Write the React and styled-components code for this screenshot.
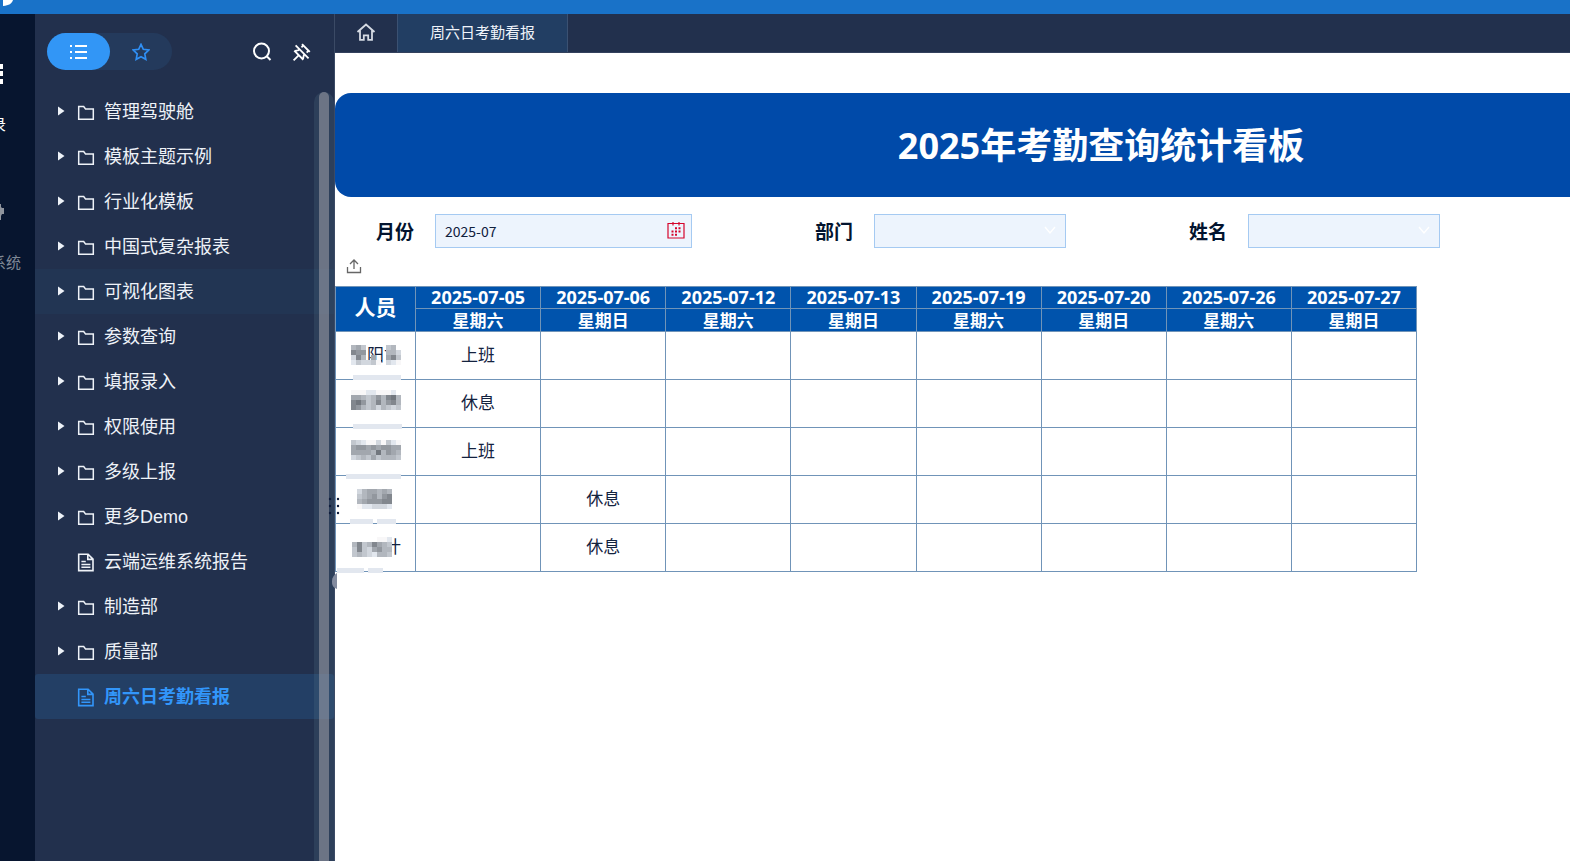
import React from 'react';
import styled, { createGlobalStyle, css } from 'styled-components';
import { RiUnpinLine } from 'react-icons/ri';

const cjk = '"Noto Sans CJK SC", sans-serif';

const GlobalStyle = createGlobalStyle`
  *, *::before, *::after { box-sizing: border-box; }
  body { margin: 0; background: #fff; font-family: "Liberation Sans", ${cjk}; overflow: hidden; }
  button { border: 0; padding: 0; background: none; color: inherit; font: inherit; cursor: pointer; }
  svg { display: block; }
`;

const Page = styled.div`
  display: flex;
  flex-direction: column;
  height: 100vh;
`;

const TopBar = styled.header`
  flex: none;
  height: 14px;
  padding-left: 3px;
  background: #1972c8;
`;

const Body = styled.div`
  display: flex;
  flex: 1;
  min-height: 0;
`;

const Rail = styled.nav`
  flex: none;
  display: flex;
  flex-direction: column;
  gap: 66px;
  width: 35px;
  padding-top: 49px;
  overflow: hidden;
  background: #07152f;
`;

const RailItem = styled.button`
  display: flex;
  flex-direction: column;
  gap: 28px;
  width: 35px;
  color: ${(p) => (p.$muted ? '#7f8896' : '#ffffff')};
  font: 15px/22px ${cjk};
`;

const RailLabel = styled.span`
  display: flex;
  justify-content: flex-end;
  align-self: flex-start;
  width: ${(p) => p.$width}px;
  white-space: nowrap;
`;

const Sidebar = styled.aside`
  flex: none;
  position: relative;
  display: flex;
  flex-direction: column;
  width: 300px;
  border-right: 1px solid #3b4a65;
  background: #22304d;
`;

const SideHeader = styled.div`
  display: flex;
  align-items: center;
  padding: 19px 24px 19px 12px;
`;

const Switcher = styled.div`
  display: flex;
  width: 125px;
  margin-right: auto;
  border-radius: 19px;
  background: #243a5c;
`;

const SwitchButton = styled.button`
  display: grid;
  place-items: center;
  flex: 1;
  height: 37px;
  border-radius: 19px;
  background: ${(p) => (p.$active ? '#3296f6' : 'transparent')};
`;

const IconButton = styled.button`
  display: grid;
  place-items: center;
  width: 20px;
  height: 20px;
  margin-left: 18px;
  color: #fff;
`;

const Tree = styled.ul`
  margin: 0;
  padding: 0;
  list-style: none;
`;

const TreeItem = styled.button`
  display: flex;
  align-items: center;
  width: 100%;
  height: 45px;
  padding: 0 0 4px 22px;
  color: #eef2f8;
  font-size: 18px;
  text-align: left;
  ${(p) => p.$hover && css`background: #223553;`}
  ${(p) => p.$active && css`
    border-radius: 3px;
    background: #233f65;
    color: #3296fa;
    font-weight: 700;
  `}
`;

const Caret = styled.span`
  width: 8px;
  margin-right: 12px;
  padding-top: 3px;
`;

const TreeIcon = styled.span`
  width: 18px;
  margin-right: 9px;
  padding-top: 6px;
`;

const ScrollTrack = styled.div`
  position: absolute;
  top: 78px;
  right: 0;
  bottom: 0;
  width: 20px;
  padding: 0 5px;
  border-radius: 10px 10px 0 0;
  background: rgba(90, 125, 145, 0.2);
`;

const ScrollThumb = styled.div`
  height: 100%;
  border-radius: 5px 5px 0 0;
  background: rgba(160, 160, 170, 0.55);
`;

const DragDots = styled.svg`
  position: absolute;
  z-index: 2;
  top: 483px;
  right: -6px;
`;

const CollapseKnob = styled.svg`
  position: absolute;
  z-index: 2;
  top: 559px;
  right: -3px;
`;

const Main = styled.main`
  flex: 1;
  min-width: 0;
  overflow: hidden;
  background: #fff;
`;

const TabBar = styled.div`
  display: flex;
  height: 39px;
  border-bottom: 1px solid #33415d;
  background: #22304d;
`;

const Tab = styled.button`
  display: flex;
  align-items: center;
  justify-content: center;
  padding: 0 ${(p) => (p.$home ? 21 : 32)}px 2px;
  border-right: 1px solid #3b5172;
  background: ${(p) => (p.$active ? '#223e63' : 'transparent')};
  color: #f0f4fa;
  font: 15px/22px ${cjk};
`;

const Report = styled.div`
  min-width: 1532px;
  padding-top: 40px;
`;

const Banner = styled.h1`
  margin: 0;
  padding: 26px 0 24px;
  border-radius: 16px;
  background: #004aa9;
  color: #fff;
  font: 700 36px/54px "Open Sans", ${cjk};
  text-align: center;
`;

const Filters = styled.form`
  display: flex;
  gap: 123px;
  padding: 17px 41px 0;
`;

const Field = styled.div`
  display: flex;
  align-items: center;
  gap: 21px;
`;

const FieldLabel = styled.label`
  color: #03142f;
  font: 700 19px/28px ${cjk};
`;

const Control = styled.div`
  position: relative;
  width: ${(p) => (p.$wide ? 257 : 192)}px;
  height: 34px;
`;

const boxed = css`
  width: 100%;
  height: 100%;
  padding: 0 9px;
  border: 1px solid #a5caf2;
  border-radius: 0;
  outline: 0;
  background: #edf4fd;
  color: #10213d;
  font: 14px/20px ${cjk};
`;

const TextBox = styled.input`${boxed}`;

const DropDown = styled.select`
  ${boxed}
  appearance: none;
`;

const ControlIcon = styled.span`
  position: absolute;
  top: 8px;
  right: ${(p) => (p.$right)}px;
  pointer-events: none;
`;

const Toolbar = styled.div`
  padding: 9px 11px 11px;
`;

const ToolButton = styled.button`
  display: block;
  width: 16px;
  height: 18px;
`;

const Table = styled.table`
  width: 1082px;
  margin: 0;
  border-collapse: collapse;
  table-layout: fixed;
  color: #14233f;
  font: 17px/22px ${cjk};

  th, td {
    padding: 0;
    border: 1px solid #7094b8;
    text-align: center;
  }
  td { height: 48px; padding-bottom: 4px; font-weight: 400; }
`;

const PersonHead = styled.th`
  && { padding-bottom: 7px; }
  width: 80px;
  background: #0053ac;
  color: #fff;
  font-size: 21px;
`;

const DateHead = styled.th`
  height: 22px;
  background: #0053ac;
  color: #fff;
  font: 700 18px/21px "Open Sans", ${cjk};
`;

const WeekHead = styled.th`
  height: 23px;
  background: #0053ac;
  color: #fff;
`;

const NameCell = styled.td`
  position: relative;
`;

const NameText = styled.span`
  display: block;
  padding-right: 14px;
  text-align: right;
`;

const Mosaic = styled.svg`
  position: absolute;
  top: 0;
  left: 0;
  overflow: visible;
`;

const tree = [
  ['管理驾驶舱'], ['模板主题示例'], ['行业化模板'], ['中国式复杂报表'], ['可视化图表', 'hover'],
  ['参数查询'], ['填报录入'], ['权限使用'], ['多级上报'], ['更多Demo'], ['云端运维系统报告', 'file'],
  ['制造部'], ['质量部'], ['周六日考勤看报', 'active'],
];

const days = [
  ['2025-07-05', '星期六'], ['2025-07-06', '星期日'], ['2025-07-12', '星期六'], ['2025-07-13', '星期日'],
  ['2025-07-19', '星期六'], ['2025-07-20', '星期日'], ['2025-07-26', '星期六'], ['2025-07-27', '星期日'],
];

/* Each mask row is a string of grey levels in hex, one for each 5px block. */
const people = [
  { name: '阳亠', day: 0, mark: '上班', x: 15, y: 13, rows: ['bac....cb.', '899....bbd', 'd8b.a..a8c', 'ecddcf.def'], bars: [[17, 43, 48]] },
  { name: '', day: 0, mark: '休息', x: 15, y: 10, rows: ['fffeefffe.', 'aabcb9b87b', '879cb8b98b', '89bcbdbcdc'], bars: [[17, 44, 49]] },
  { name: '', day: 0, mark: '上班', x: 15, y: 12, rows: ['cdeffdfcef', 'a99a9a99aa', 'aaaab7b9ab', 'dcbcacbbbc'], bars: [[10, 46, 55]] },
  { name: '', day: 1, mark: '休息', x: 21, y: 13, rows: ['dbaabab', 'cba9b98', 'ba99988', 'feeddde'], bars: [[14, 43, 23], [41, 43, 19]] },
  { name: '计', day: 1, mark: '休息', x: 16, y: 13, rows: ['.....ffe', 'b8cb8abc', 'c8cda9bb', 'cbcdebbc'], bars: [[1, 44, 27], [32, 44, 15]] },
];

const shade = (hex) => {
  const v = parseInt(hex, 16) * 16 + 8;
  const t = v > 235 ? 0 : 6;
  return `rgb(${v - t}, ${v - 1}, ${v + t})`;
};

function NameMosaic({ x, y, rows, bars }) {
  return (
    <Mosaic width="80" height="48" shapeRendering="crispEdges" aria-hidden="true">
      {rows.map((row, r) => [...row].map((c, i) => c !== '.' && (
        <rect key={`${r}-${i}`} x={x + i * 5} y={y + r * 5} width="5" height="5" fill={shade(c)} />
      )))}
      {bars.map(([bx, by, w]) => <rect key={bx} x={bx} y={by} width={w} height="5" fill="#e2e7ef" />)}
    </Mosaic>
  );
}

const FolderIcon = () => (
  <svg width="18" height="16" viewBox="0 0 18 16" fill="none" stroke="currentColor" strokeWidth="1.5">
    <path d="M1.7 1.6h5l1.8 2.3h7.8v10.4H1.7z" />
  </svg>
);

const FileIcon = () => (
  <svg width="18" height="19" viewBox="0 0 18 19" fill="none" stroke="currentColor" strokeWidth="1.6">
    <path d="M1.7 1.2h9.4l4.9 5v11.4H1.7zM10.8 1.4v5h5M4.4 8.5h4.4M4.4 11.5h9M4.4 14.3h9" />
  </svg>
);

const Chevron = () => (
  <svg width="14" height="18" viewBox="0 0 14 18" fill="none" stroke="#fff" strokeWidth="1.4">
    <path d="M2 5l5 6 5-6" />
  </svg>
);

export default function App() {
  return (
    <>
      <GlobalStyle />
      <Page>
        <TopBar>
          <svg width="11" height="7"><path d="M0 0h10c-1 3.500-4 5.500-10 6z" fill="#fff" /></svg>
        </TopBar>
        <Body>
          <Rail>
            <RailItem>
              <svg width="4" height="22" fill="#fff"><path d="M0 1h3v5H0zM0 8h3v5H0zM0 16h3v5H0z" /></svg>
              <RailLabel $width={6}>录</RailLabel>
            </RailItem>
            <RailItem $muted>
              <svg width="5" height="22" fill="#8f949d"><path d="M0 3h1v3l1 1h2v6H2l-1 2v4H0z" /></svg>
              <RailLabel $width={21}>系统</RailLabel>
            </RailItem>
          </Rail>

          <Sidebar>
            <SideHeader>
              <Switcher>
                <SwitchButton $active aria-label="目录">
                  <svg width="18" height="16" fill="#fff"><path d="M1 1h2v2H1zM6 1h12v2H6zM1 7h2v2H1zM6 7h12v2H6zM1 13h2v2H1zM6 13h12v2H6z" /></svg>
                </SwitchButton>
                <SwitchButton aria-label="收藏">
                  <svg width="18" height="18" viewBox="0 0 18 18" fill="none" stroke="#2f8ff5" strokeWidth="1.7">
                    <path d="M9 1.400l2.300 4.900 5.400.7-3.900 3.800 1 5.500L9 13.700l-4.800 2.600 1-5.500L1.300 7l5.400-.7z" />
                  </svg>
                </SwitchButton>
              </Switcher>
              <IconButton aria-label="搜索">
                <svg width="20" height="20" fill="none" stroke="currentColor" strokeWidth="2">
                  <circle cx="9.500" cy="9" r="7.500" /><path d="M15 14.500l3.500 3.500" />
                </svg>
              </IconButton>
              <IconButton aria-label="取消固定"><RiUnpinLine size={22} /></IconButton>
            </SideHeader>
            <Tree>
              {tree.map(([label, kind]) => {
                const isFile = kind === 'file' || kind === 'active';
                return (
                  <li key={label}>
                    <TreeItem $hover={kind === 'hover'} $active={kind === 'active'}>
                      <Caret>
                        {!isFile && <svg width="8" height="10" fill="currentColor"><path d="M1 0.500l6.500 4.500L1 9.500z" /></svg>}
                      </Caret>
                      <TreeIcon>{isFile ? <FileIcon /> : <FolderIcon />}</TreeIcon>
                      {label}
                    </TreeItem>
                  </li>
                );
              })}
            </Tree>
            <ScrollTrack><ScrollThumb /></ScrollTrack>
            <DragDots width="12" height="18" fill="#0f1c3c">
              {[2, 9, 16].map((y) => <React.Fragment key={y}><circle cx="2" cy={y} r="1.200" /><circle cx="10" cy={y} r="1.200" /></React.Fragment>)}
            </DragDots>
            <CollapseKnob width="5" height="16"><path d="M5 0C1 3 0 5 0 9s2 6 5 7z" fill="#838b9f" /></CollapseKnob>
          </Sidebar>

          <Main>
            <TabBar>
              <Tab $home aria-label="首页">
                <svg width="20" height="20" viewBox="0 0 20 20" fill="none" stroke="#d5dae3" strokeWidth="1.800">
                  <path d="M1.500 10L10 2.500l8.500 7.500M4 8.500v9.300h3.800v-4.500h4.400v4.500H16V8.500" />
                </svg>
              </Tab>
              <Tab $active>周六日考勤看报</Tab>
            </TabBar>
            <Report>
              <Banner>2025年考勤查询统计看板</Banner>
              <Filters>
                <Field>
                  <FieldLabel htmlFor="month">月份</FieldLabel>
                  <Control $wide>
                    <TextBox id="month" defaultValue="2025-07" />
                    <ControlIcon $right={7}>
                      <svg width="18" height="17" fill="none" stroke="#d5042c" strokeWidth="1.200">
                        <path d="M1 1.500h16v14.500H1zM6 0v3.500M12 0v3.500" />
                        <path d="M8 6.200h2M11.500 6.200h2M4.500 9.500h2M8 9.500h2M11.500 9.500h2M4.500 12.800h2M8 12.800h2" strokeWidth="2" />
                      </svg>
                    </ControlIcon>
                  </Control>
                </Field>
                <Field>
                  <FieldLabel htmlFor="dept">部门</FieldLabel>
                  <Control>
                    <DropDown id="dept"><option /></DropDown>
                    <ControlIcon $right={9}><Chevron /></ControlIcon>
                  </Control>
                </Field>
                <Field>
                  <FieldLabel htmlFor="person">姓名</FieldLabel>
                  <Control>
                    <DropDown id="person"><option /></DropDown>
                    <ControlIcon $right={9}><Chevron /></ControlIcon>
                  </Control>
                </Field>
              </Filters>
              <Toolbar>
                <ToolButton aria-label="导出">
                  <svg width="16" height="18" fill="none" stroke="#666" strokeWidth="1.300">
                    <path d="M1.500 10v5.500h13V10M8 12V3M4 7l4-4 4 4" />
                  </svg>
                </ToolButton>
              </Toolbar>
              <Table>
                <thead>
                  <tr>
                    <PersonHead rowSpan={2}>人员</PersonHead>
                    {days.map(([date]) => <DateHead key={date}>{date}</DateHead>)}
                  </tr>
                  <tr>
                    {days.map(([date, week]) => <WeekHead key={date}>{week}</WeekHead>)}
                  </tr>
                </thead>
                <tbody>
                  {people.map((p, i) => (
                    <tr key={i}>
                      <NameCell>
                        <NameText>{p.name}</NameText>
                        <NameMosaic x={p.x} y={p.y} rows={p.rows} bars={p.bars} />
                      </NameCell>
                      {days.map(([date], d) => <td key={date}>{d === p.day ? p.mark : ''}</td>)}
                    </tr>
                  ))}
                </tbody>
              </Table>
            </Report>
          </Main>
        </Body>
      </Page>
    </>
  );
}
